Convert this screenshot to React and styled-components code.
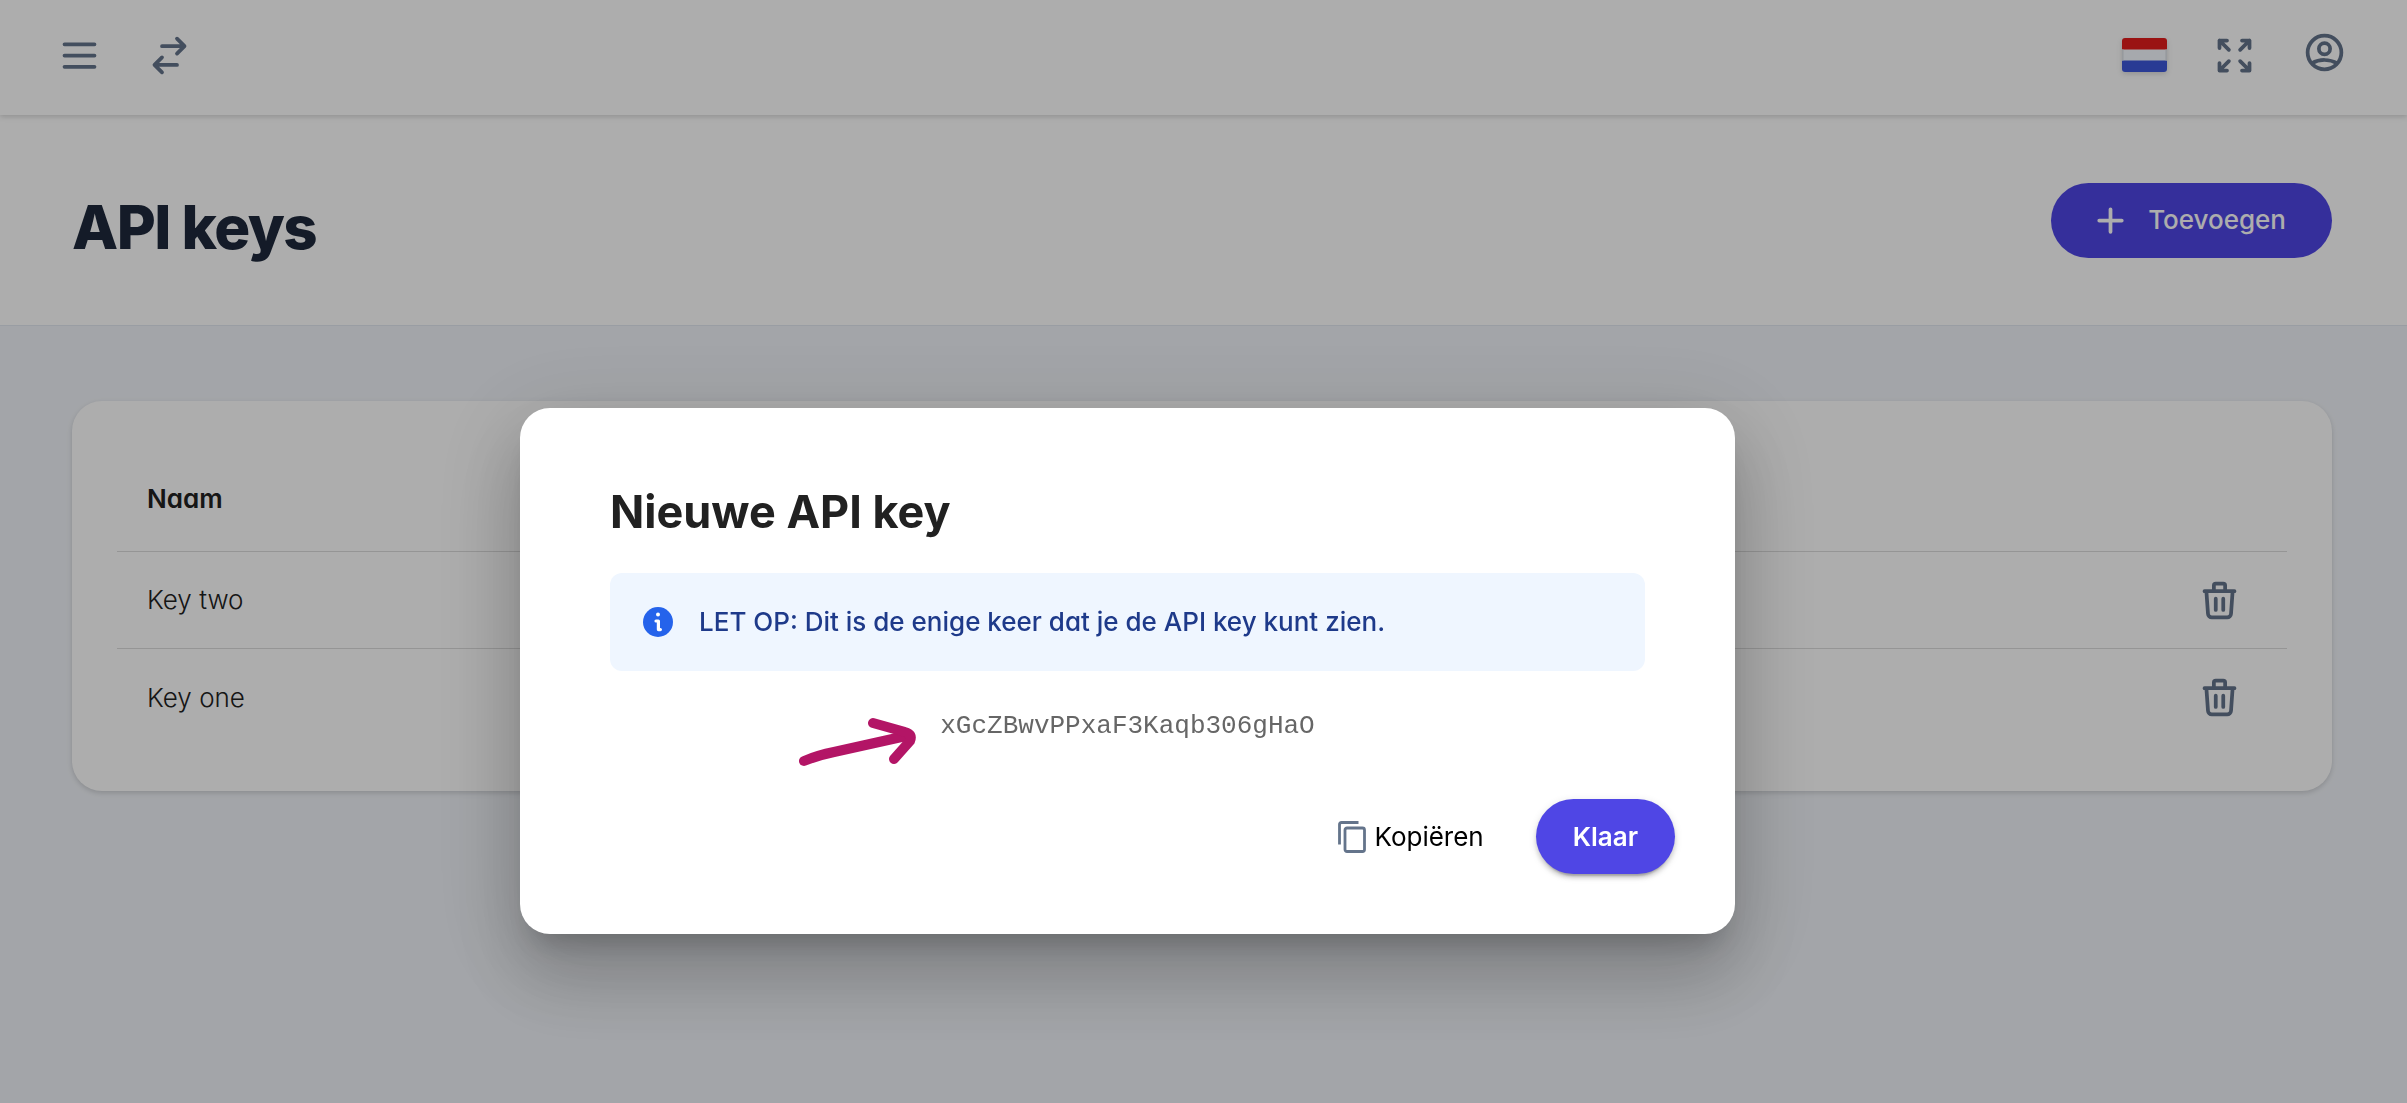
import React from 'react'
import styled, { createGlobalStyle } from 'styled-components'

const GlobalStyle = createGlobalStyle`
  * {
    box-sizing: border-box;
  }

  body {
    margin: 0;
    min-height: 100vh;
    background: #f1f4f9;
    color: #212121;
    font-family: Inter, 'Liberation Sans', sans-serif;
    font-size: 26px;
    line-height: 38px;
    font-feature-settings: 'cv11';
    font-optical-sizing: none;
  }
`

const TopBar = styled.header`
  position: relative;
  display: flex;
  justify-content: space-between;
  height: 115px;
  padding: 33px 60px 0 57px;
  background: #fff;
  box-shadow: 0 2px 6px rgba(0, 0, 0, .1), 0 2px 4px rgba(0, 0, 0, .06);
`

const TopBarGroup = styled.div`
  display: flex;
  align-items: flex-start;
  gap: 45px;
`

const IconButton = styled.button`
  display: flex;
  padding: 0;
  border: 0;
  background: none;
  color: #64748b;
  cursor: pointer;
`

const RaisedIconButton = styled(IconButton)`
  margin-top: -3px;
`

const StrokeSvg = styled.svg`
  width: 45px;
  height: 45px;
  fill: none;
  stroke: currentColor;
  stroke-width: 2;
  stroke-linecap: round;
  stroke-linejoin: round;
`

const FlagSvg = styled.svg`
  width: 45px;
  height: 34px;
  margin-top: 5px;
  border-radius: 3px;
  box-shadow: 0 2px 6px rgba(0, 0, 0, .1), 0 2px 4px rgba(0, 0, 0, .06);
`

const PageHeader = styled.div`
  display: flex;
  align-items: center;
  justify-content: space-between;
  height: 211px;
  padding: 0 75px 0 72px;
  background: #fff;
  border-bottom: 1px solid #e2e8f0;
`

const PageTitle = styled.h1`
  margin: 0;
  padding-top: 14px;
  color: #1e293b;
  font-size: 60px;
  font-weight: 800;
  line-height: 70px;
  letter-spacing: -0.025em;
`

const PillButton = styled.button`
  display: flex;
  align-items: center;
  gap: 15px;
  height: 75px;
  padding: ${props => props.$padding};
  border: 0;
  border-radius: 38px;
  background: #4f46e5;
  color: #fff;
  font: inherit;
  font-weight: ${props => props.$weight};
  font-feature-settings: normal;
  box-shadow: ${props => props.$raised
    ? '0 6px 2px -4px rgba(0, 0, 0, .2), 0 4px 4px rgba(0, 0, 0, .14), 0 2px 9px rgba(0, 0, 0, .12)'
    : 'none'};
  cursor: pointer;
`

const Content = styled.main`
  padding: 75px 75px 75px 72px;
`

const Card = styled.section`
  padding: 45px;
  border-radius: 30px;
  background: #fff;
  box-shadow: 0 2px 6px rgba(0, 0, 0, .1), 0 2px 4px rgba(0, 0, 0, .06);
`

const KeyTable = styled.table`
  width: 100%;
  border-spacing: 0;
`

const HeadCell = styled.th`
  height: 106px;
  padding: 0 30px;
  border-bottom: 1px solid #dcdcdc;
  font-weight: 600;
  text-align: left;
`

const Cell = styled.td`
  height: 97px;
  padding: 0 30px;
  border-bottom: 1px solid #dcdcdc;
  font-weight: 300;

  tr:last-child > & {
    border-bottom: 0;
  }
`

const ActionCell = styled(Cell)`
  width: 135px;
  padding: 0 45px;
`

const Overlay = styled.div`
  position: fixed;
  inset: 0;
  display: flex;
  align-items: flex-start;
  justify-content: center;
  padding: 408px 152px 0 0;
  background: rgba(0, 0, 0, .32);
`

const Dialog = styled.div`
  width: 100%;
  max-width: 1215px;
  padding: 74px 60px 60px 90px;
  border-radius: 30px;
  background: #fff;
  box-shadow: 0 21px 28px -13px rgba(0, 0, 0, .2),
    0 45px 71px 6px rgba(0, 0, 0, .14),
    0 17px 86px 15px rgba(0, 0, 0, .12);
`

const DialogBody = styled.div`
  padding-right: 30px;
`

const DialogTitle = styled.h2`
  margin: 0 0 31px;
  font-size: 45px;
  font-weight: 700;
  line-height: 60px;
`

const Alert = styled.div`
  display: flex;
  align-items: center;
  gap: 26px;
  padding: 30px 33px;
  border-radius: 12px;
  background: #eff6ff;
  color: #1e3a8a;
  font-weight: 500;
`

const InfoSvg = styled.svg`
  width: 30px;
  height: 30px;
`

const KeyRow = styled.div`
  display: flex;
  justify-content: center;
  margin-top: 36px;
`

const KeyValue = styled.code`
  position: relative;
  color: #666;
  font-family: 'Liberation Mono', monospace;
  font-size: 26px;
  line-height: 38px;
`

const ArrowSvg = styled.svg`
  position: absolute;
  top: 7px;
  right: 100%;
  width: 144px;
  height: 56px;
  fill: none;
  stroke: #b31566;
  stroke-width: 10;
  stroke-linecap: round;
  stroke-linejoin: round;
`

const DialogActions = styled.div`
  display: flex;
  align-items: center;
  justify-content: flex-end;
  gap: 52px;
  margin-top: 54px;
`

const CopyButton = styled.button`
  display: flex;
  align-items: center;
  gap: 8px;
  padding: 0;
  border: 0;
  background: none;
  color: #000;
  font: inherit;
  cursor: pointer;
`

const CopySvg = styled.svg`
  width: 28px;
  height: 32px;
  fill: none;
  stroke: #64748b;
  stroke-width: 2.8;
  stroke-linejoin: round;
`

const icons = {
  menu: 'M4 6h16M4 12h16M4 18h16',
  switch: 'M8 7h12m0 0l-4-4m4 4l-4 4m0 6H4m0 0l4 4m-4-4l4-4',
  expand: 'M4 8V4m0 0h4M4 4l5 5m11-1V4m0 0h-4m4 0l-5 5M4 16v4m0 0h4m-4 0l5-5m11 5l-5-5m5 5v-4m0 4h-4',
  user: 'M5.121 17.804A13.937 13.937 0 0112 16c2.5 0 4.847.655 6.879 1.804M15 10a3 3 0 11-6 0 3 3 0 016 0zm6 2a9 9 0 11-18 0 9 9 0 0118 0z',
  plus: 'M12 6v12M6 12h12',
  trash: 'M19 7l-.867 12.142A2 2 0 0116.138 21H7.862a2 2 0 01-1.995-1.858L5 7m5 4v6m4-6v6m1-10V4a1 1 0 00-1-1h-4a1 1 0 00-1 1v3M4 7h16',
}

const Icon = ({ name }) => (
  <StrokeSvg viewBox="0 0 24 24" aria-hidden="true">
    <path d={icons[name]} />
  </StrokeSvg>
)

const Flag = () => (
  <FlagSvg viewBox="0 0 45 34" aria-hidden="true">
    <rect width="45" height="34" fill="#f5faff" />
    <rect width="45" height="11.5" fill="#e31d1c" />
    <rect y="22.5" width="45" height="11.5" fill="#3d58db" />
    <path d="M.8 11.5v11M44.2 11.5v11" stroke="#dde2e8" strokeWidth="1.6" />
  </FlagSvg>
)

const keys = ['Key two', 'Key one']

const NewKeyDialog = ({ value }) => (
  <Overlay>
    <Dialog role="dialog" aria-modal="true" aria-labelledby="dialog-title">
      <DialogBody>
        <DialogTitle id="dialog-title">Nieuwe API key</DialogTitle>
        <Alert role="alert">
          <InfoSvg viewBox="0 0 30 30" aria-hidden="true">
            <circle cx="15" cy="15" r="15" fill="#2563eb" />
            <circle cx="15" cy="7.6" r="2" fill="#fff" />
            <path d="M13 14h2.4v8.600h2" fill="none" stroke="#fff" strokeWidth="3.2" strokeLinecap="round" strokeLinejoin="round" />
          </InfoSvg>
          <span>LET OP: Dit is de enige keer dat je de API key kunt zien.</span>
        </Alert>
        <KeyRow>
          <KeyValue>
            <ArrowSvg viewBox="0 0 144 56" aria-hidden="true">
              <path d="M8 47C20 42 28 40 38 38L110 22" />
              <path d="M77 9L109 18Q117 20 114 27L98 45" />
            </ArrowSvg>
            {value}
          </KeyValue>
        </KeyRow>
      </DialogBody>
      <DialogActions>
        <CopyButton type="button">
          <CopySvg viewBox="0 0 28 32" aria-hidden="true">
            <path d="M1.5 23.5V3.5q0-2 2-2H20.5" />
            <rect x="7" y="7" width="19.5" height="23.5" rx="2" />
          </CopySvg>
          Kopiëren
        </CopyButton>
        <PillButton type="button" $padding="0 37px" $weight={600} $raised>Klaar</PillButton>
      </DialogActions>
    </Dialog>
  </Overlay>
)

const App = () => {
  return (
    <>
      <GlobalStyle />
      <TopBar>
        <TopBarGroup>
          <IconButton type="button" aria-label="Menu"><Icon name="menu" /></IconButton>
          <IconButton type="button" aria-label="Wisselen"><Icon name="switch" /></IconButton>
        </TopBarGroup>
        <TopBarGroup>
          <IconButton type="button" aria-label="Taal"><Flag /></IconButton>
          <IconButton type="button" aria-label="Volledig scherm"><Icon name="expand" /></IconButton>
          <RaisedIconButton type="button" aria-label="Account"><Icon name="user" /></RaisedIconButton>
        </TopBarGroup>
      </TopBar>
      <PageHeader>
        <PageTitle>API keys</PageTitle>
        <PillButton type="button" $padding="0 46px 0 37px" $weight={500}>
          <Icon name="plus" />
          Toevoegen
        </PillButton>
      </PageHeader>
      <Content>
        <Card>
          <KeyTable>
            <thead>
              <tr>
                <HeadCell scope="col">Naam</HeadCell>
                <HeadCell scope="col" aria-label="Acties" />
              </tr>
            </thead>
            <tbody>
              {keys.map(name => (
                <tr key={name}>
                  <Cell>{name}</Cell>
                  <ActionCell>
                    <IconButton type="button" aria-label={`Verwijder ${name}`}><Icon name="trash" /></IconButton>
                  </ActionCell>
                </tr>
              ))}
            </tbody>
          </KeyTable>
        </Card>
      </Content>
      <NewKeyDialog value="xGcZBwvPPxaF3Kaqb306gHaO" />
    </>
  )
}

export default App
